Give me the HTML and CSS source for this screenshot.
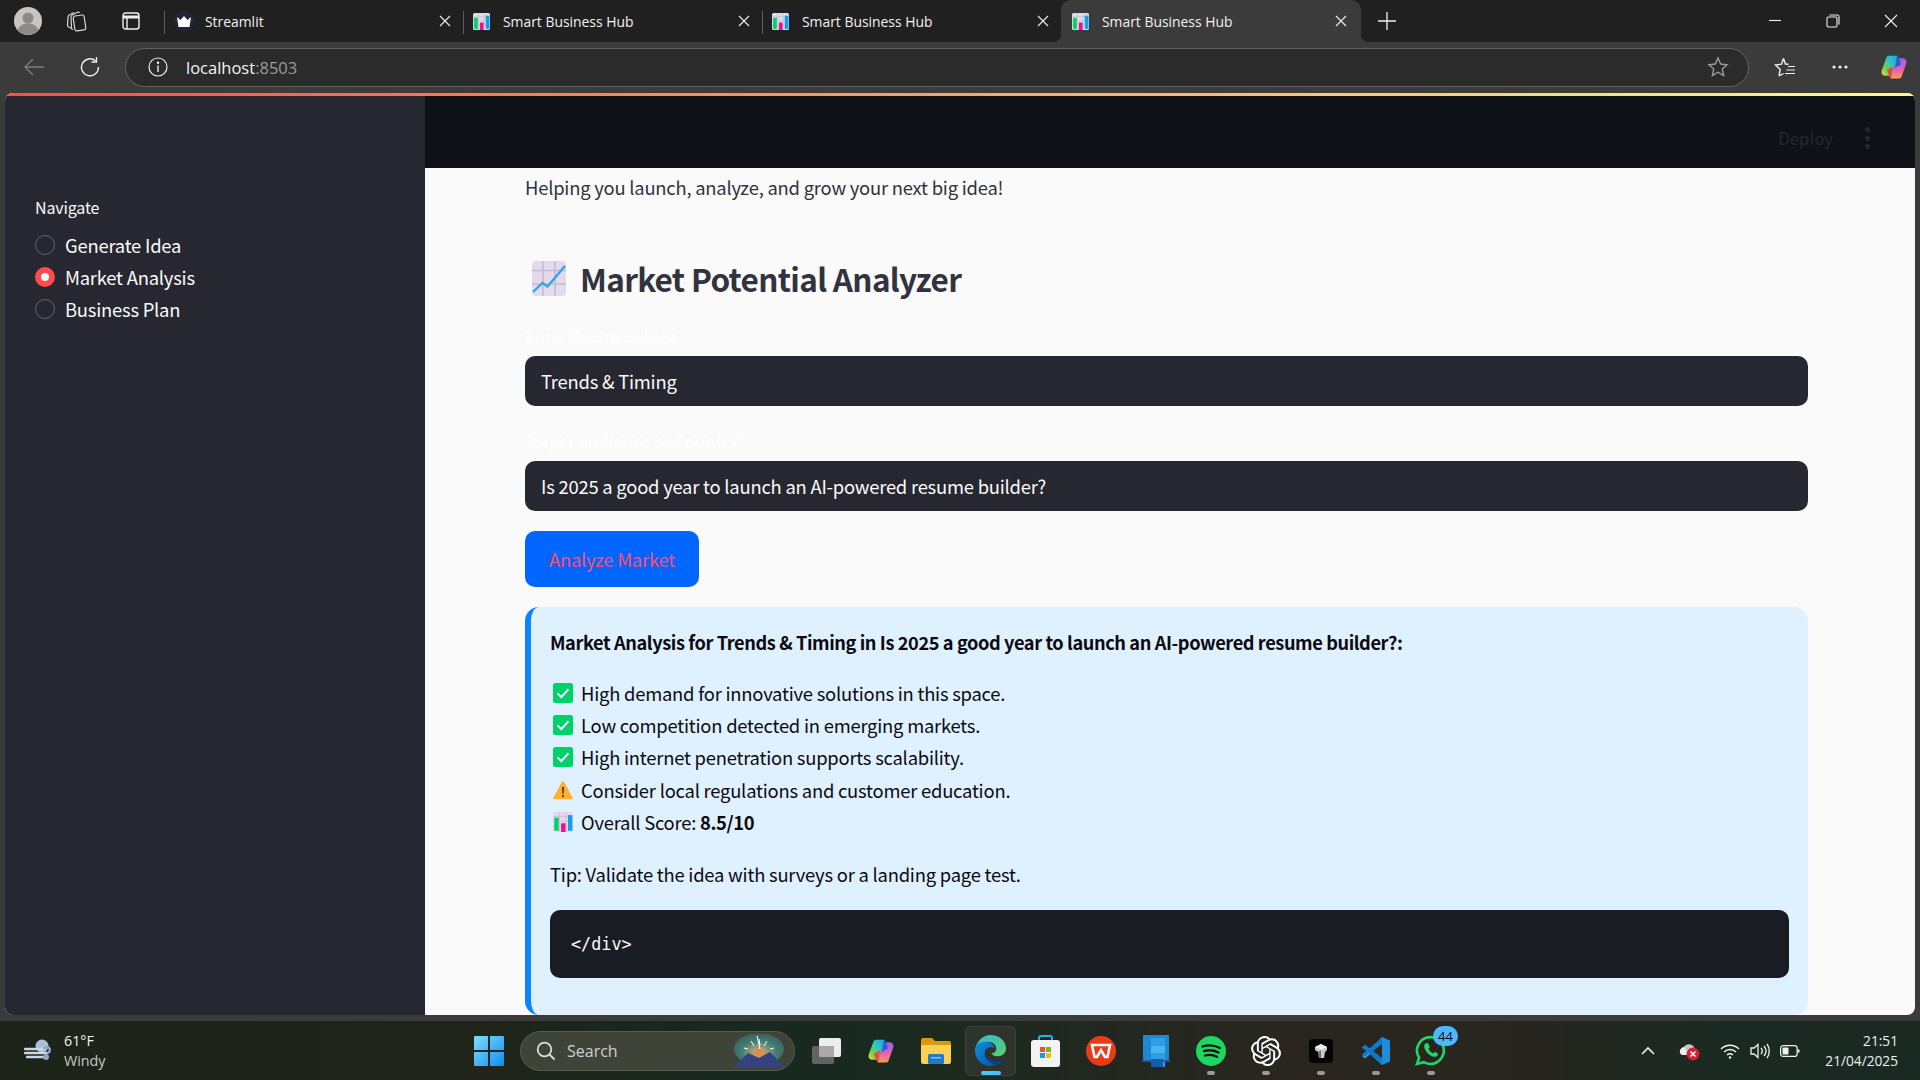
FILE: index.html
```html
<!DOCTYPE html>
<html lang="en">
<head>
<meta charset="utf-8">
<title>Smart Business Hub</title>
<link rel="stylesheet" href="styles.css">
</head>
<body>
<svg class="defs" width="0" height="0" aria-hidden="true">
  <defs>
    <symbol id="barchart" viewBox="0 0 32 32">
      <rect width="32" height="32" rx="3" fill="#e3daec"/>
      <path d="M0 7h32M0 15h32M0 23h32M10 0v32M21 0v32" stroke="#c9bdd3" stroke-width="1.4"/>
      <rect x="2" y="9" width="7" height="21" fill="#00d26a"/>
      <rect x="13" y="18" width="7" height="14" fill="#f70a8d"/>
      <rect x="24" y="5" width="7" height="25" fill="#0fa0e8"/>
    </symbol>
    <symbol id="check" viewBox="0 0 20 20">
      <rect width="20" height="20" rx="2.5" fill="#00d26a"/>
      <path d="M4.6 10.4l3.7 3.7 7.2-8" fill="none" stroke="#fff" stroke-width="2"/>
    </symbol>
    <symbol id="copilot" viewBox="0 0 32 32">
      <defs>
        <linearGradient id="cpa" x1="1" y1="0" x2="0" y2="1"><stop offset="0" stop-color="#12a8f0"/><stop offset=".4" stop-color="#30c4c0"/><stop offset=".7" stop-color="#6dd24a"/><stop offset="1" stop-color="#f3d43a"/></linearGradient>
        <linearGradient id="cpb" x1="0" y1="0" x2="0" y2="1"><stop offset="0" stop-color="#a25be8"/><stop offset=".55" stop-color="#e65fb8"/><stop offset="1" stop-color="#ff9a50"/></linearGradient>
      </defs>
      <path d="M10 3h10l-6 20c-.6 2-2 3-4 3H6c-3 0-5-2.500-4-6L7 6c.6-2 1.500-3 3-3z" fill="url(#cpa)"/>
      <path d="M22 29H12l6-20c.6-2 2-3 4-3h4c3 0 5 2.500 4 6l-5 14c-.6 2-1.500 3-3 3z" fill="url(#cpb)"/>
      <path d="M17 3c3 0 4.500 1.500 5 4l2 6-7 4 3-14z" fill="#1668d8"/>
      <path d="M15 29c-3 0-4.500-1.500-5-4l-2-6 7-4-3 14z" fill="#e8483a"/>
    </symbol>
  </defs>
</svg>

<header class="titlebar">
  <div class="tb-btn tb-profile">
    <svg width="28" height="28" viewBox="0 0 28 28"><circle cx="14" cy="14" r="14" fill="#c8c6c1"/><circle cx="14" cy="11" r="5.5" fill="#8d8b87"/><path d="M3.5 23c2-5 6-6.500 10.500-6.500S22.500 18 24.500 23A14 14 0 0 1 3.500 23z" fill="#8d8b87"/></svg>
  </div>
  <div class="tb-btn tb-work">
    <svg width="24" height="24" viewBox="0 0 24 24" fill="none" stroke="#d6d6d6" stroke-width="1.200"><path d="M6 19l-2-.8c-1-.5-1.500-1-1.500-2L3 8c.1-1 .6-1.700 1.600-2.200L9 3.500"/><path d="M8 20.500l-1.500-.6L6 8c0-1 .6-1.700 1.500-2.200L12 3.500c1-.5 2-.3 2.500.5"/><rect x="9" y="6.500" width="11" height="15" rx="2" transform="rotate(-8 14 14)"/></svg>
  </div>
  <div class="tb-btn tb-vert">
    <svg width="18" height="18" viewBox="0 0 18 18" fill="none" stroke="#f0f0f0" stroke-width="1.400"><rect x="1" y="1" width="16" height="16" rx="2.500"/><path d="M1 5h16" stroke-width="3"/><path d="M5 5v12"/></svg>
  </div>
  <div class="tab tab-first">
    <span class="fav-st"><svg width="14" height="11" viewBox="0 0 14 11"><path d="M0 1l3.500 3L7 0l3.500 4L14 1l-1.500 10h-11z" fill="#fff"/></svg></span>
    <span class="tab-title">Streamlit</span>
    <svg class="tab-x" width="12" height="12" viewBox="0 0 12 12"><path d="M1 1l10 10M11 1L1 11" stroke="#e8e8e8" stroke-width="1.200"/></svg>
  </div>
  <div class="tab">
    <svg class="fav" width="17" height="17"><use href="#barchart"/></svg>
    <span class="tab-title">Smart Business Hub</span>
    <svg class="tab-x" width="12" height="12" viewBox="0 0 12 12"><path d="M1 1l10 10M11 1L1 11" stroke="#e8e8e8" stroke-width="1.200"/></svg>
  </div>
  <div class="tab tab-before-active">
    <svg class="fav" width="17" height="17"><use href="#barchart"/></svg>
    <span class="tab-title">Smart Business Hub</span>
    <svg class="tab-x" width="12" height="12" viewBox="0 0 12 12"><path d="M1 1l10 10M11 1L1 11" stroke="#e8e8e8" stroke-width="1.200"/></svg>
  </div>
  <div class="tab tab-active">
    <svg class="fav" width="17" height="17"><use href="#barchart"/></svg>
    <span class="tab-title">Smart Business Hub</span>
    <svg class="tab-x" width="12" height="12" viewBox="0 0 12 12"><path d="M1 1l10 10M11 1L1 11" stroke="#e8e8e8" stroke-width="1.200"/></svg>
  </div>
  <div class="tab-new">
    <svg width="18" height="18" viewBox="0 0 18 18"><path d="M9 0v18M0 9h18" stroke="#f0f0f0" stroke-width="1.300"/></svg>
  </div>
  <div class="win-controls">
    <svg width="14" height="14" viewBox="0 0 14 14"><path d="M1 6.500h12" stroke="#f0f0f0" stroke-width="1.100"/></svg>
    <svg width="14" height="14" viewBox="0 0 14 14" fill="none" stroke="#f0f0f0" stroke-width="1.100"><rect x="1" y="3" width="10" height="10" rx="1.500"/><path d="M3.500 1h8c1 0 1.500.5 1.500 1.500v8"/></svg>
    <svg width="14" height="14" viewBox="0 0 14 14"><path d="M1 1l12 12M13 1L1 13" stroke="#f0f0f0" stroke-width="1.100"/></svg>
  </div>
</header>

<nav class="toolbar">
  <div class="nav-btn nav-back">
    <svg width="20" height="18" viewBox="0 0 20 18" fill="none" stroke="#7d7d7d" stroke-width="1.300"><path d="M20 9H1M9 1L1 9l8 8"/></svg>
  </div>
  <div class="nav-btn nav-reload">
    <svg width="20" height="20" viewBox="0 0 20 20" fill="none" stroke="#f0f0f0" stroke-width="1.400"><path d="M15.500 3.800A8.500 8.500 0 1 0 18.500 10"/><path d="M16.500 0v5h-5"/></svg>
  </div>
  <div class="address">
    <svg class="addr-info" width="20" height="20" viewBox="0 0 20 20" fill="none" stroke="#ececec" stroke-width="1.200"><circle cx="10" cy="10" r="9"/><path d="M10 8.500V15" stroke-width="1.400"/><circle cx="10" cy="5.800" r=".6" fill="#ececec"/></svg>
    <span class="addr-text">localhost<span class="addr-port">:8503</span></span>
    <svg class="addr-star" width="22" height="22" viewBox="0 0 22 22" fill="none" stroke="#9a9a9a" stroke-width="1.400"><path d="M11 2l2.700 6 6.300.7-4.700 4.300 1.300 6.500L11 16.200 5.400 19.500 6.700 13 2 8.700 8.300 8z"/></svg>
  </div>
  <div class="tool-icons">
    <svg class="ti-fav" width="22" height="20" viewBox="0 0 22 20" fill="none" stroke="#f0f0f0" stroke-width="1.400"><path d="M9.500 1.500l2 5.500 3 .3M5 19l1.200-6.500L1.500 8l6-.8 2-5.700M5 19l4.500-2.500"/><path d="M14 9.500h7M12.500 13h8.500M11 16.500h10" stroke-width="1.200"/></svg>
    <svg class="ti-dots" width="16" height="4" viewBox="0 0 16 4" fill="#f0f0f0"><circle cx="2" cy="2" r="1.600"/><circle cx="8" cy="2" r="1.600"/><circle cx="14" cy="2" r="1.600"/></svg>
    <svg class="ti-copilot" width="28" height="28"><use href="#copilot"/></svg>
  </div>
</nav>

<div class="viewport">
  <div class="app">
    <div class="decoration"></div>
    <div class="app-body">
      <aside class="sidebar">
        <div class="nav-label">Navigate</div>
        <div class="radio-group">
          <div class="radio"><span class="dot"></span><span>Generate Idea</span></div>
          <div class="radio"><span class="dot dot-on"></span><span>Market Analysis</span></div>
          <div class="radio"><span class="dot"></span><span>Business Plan</span></div>
        </div>
      </aside>
      <div class="main-col">
        <div class="app-header">
          <span class="deploy">Deploy</span>
          <span class="kebab"><i></i><i></i><i></i></span>
        </div>
        <main class="main">
          <p class="tagline">Helping you launch, analyze, and grow your next big idea!</p>
          <h1 class="page-title">
            <svg class="title-emoji" width="34" height="35" viewBox="0 0 34 35">
              <rect width="34" height="35" rx="4" fill="#e3daec"/>
              <path d="M0 9.500h34M0 23h34M11 0v35M23 0v35" stroke="#c6b9d1" stroke-width="1.600"/>
              <path d="M1 31l9.500-9 5 3.500L33 5" fill="none" stroke="#2ea6ea" stroke-width="2.400"/>
            </svg>
            <span>Market Potential Analyzer</span>
          </h1>
          <label class="ghost-label">Enter Business Idea</label>
          <div class="select">Trends &amp; Timing</div>
          <label class="ghost-label ghost-second">Target Audience or Country</label>
          <div class="select">Is 2025 a good year to launch an AI-powered resume builder?</div>
          <button class="analyze">Analyze Market</button>
          <section class="result">
            <p class="result-title">Market Analysis for Trends &amp; Timing in Is 2025 a good year to launch an AI-powered resume builder?:</p>
            <ul class="result-list">
              <li><svg width="20" height="20"><use href="#check"/></svg><span>High demand for innovative solutions in this space.</span></li>
              <li><svg width="20" height="20"><use href="#check"/></svg><span>Low competition detected in emerging markets.</span></li>
              <li><svg width="20" height="20"><use href="#check"/></svg><span>High internet penetration supports scalability.</span></li>
              <li><svg width="20" height="20" viewBox="0 0 20 20"><path d="M10 1.500a1.500 1.500 0 0 1 1.300.8l8.300 15.200a1.200 1.200 0 0 1-1 1.800H1.400a1.200 1.200 0 0 1-1-1.800L8.700 2.300A1.500 1.500 0 0 1 10 1.500z" fill="#ffb02e"/><path d="M9.200 7h1.600l-.3 7h-1z" fill="#1a1a1a"/><circle cx="10" cy="16" r="1" fill="#1a1a1a"/></svg><span>Consider local regulations and customer education.</span></li>
              <li><svg width="20" height="20"><use href="#barchart"/></svg><span>Overall Score: <strong>8.5/10</strong></span></li>
            </ul>
            <p class="result-tip">Tip: Validate the idea with surveys or a landing page test.</p>
            <pre class="code">&lt;/div&gt;</pre>
          </section>
        </main>
      </div>
    </div>
  </div>
</div>

<footer class="taskbar">
  <div class="weather">
    <svg width="30" height="24" viewBox="0 0 30 24"><circle cx="18" cy="7" r="6.500" fill="#a9c2dc"/><path d="M1 10h18M1 14h22M3 18h16" stroke="#c9d6e3" stroke-width="2.400" stroke-linecap="round"/><path d="M23 14a3 3 0 1 0-3-4" fill="none" stroke="#8fa8c4" stroke-width="2.400"/><circle cx="22" cy="18" r="3" fill="#8fa8c4"/></svg>
    <div class="weather-text"><span>61°F</span><span class="weather-sub">Windy</span></div>
  </div>
  <div class="task-start">
    <svg width="30" height="30" viewBox="0 0 30 30"><defs><linearGradient id="win" x1="0" y1="0" x2="1" y2="1"><stop offset="0" stop-color="#7fdcff"/><stop offset="1" stop-color="#0f8ff0"/></linearGradient></defs><path d="M1 0h13v14H0V1a1 1 0 0 1 1-1zM16 0h13a1 1 0 0 1 1 1v13H16zM0 16h14v14H1a1 1 0 0 1-1-1zM16 16h14v13a1 1 0 0 1-1 1H16z" fill="url(#win)"/></svg>
  </div>
  <div class="search">
    <svg width="20" height="20" viewBox="0 0 20 20" fill="none" stroke="#dcdcdc" stroke-width="1.800"><circle cx="8.500" cy="8.500" r="6.800"/><path d="M13.500 13.500l5 5"/></svg>
    <span class="search-text">Search</span>
    <svg class="search-art" width="52" height="34" viewBox="0 0 52 34"><defs><radialGradient id="sky" cx=".5" cy=".6" r=".7"><stop offset="0" stop-color="#e8b070"/><stop offset=".5" stop-color="#3d7f78"/><stop offset="1" stop-color="#45504a"/></radialGradient></defs><ellipse cx="26" cy="15" rx="25" ry="16" fill="url(#sky)"/><path d="M0 34L15 19l11 5 11-6 15 16z" fill="#35427f"/><path d="M26 24l-5-6 5-4 5 4z" fill="#e8894a"/><path d="M26 5l1 6M18 7l3 5M34 7l-3 5M11 14l4 1M41 14l-4 1M24 2l3 13" stroke="#fff" stroke-width="1"/></svg>
  </div>
  <div class="apps">
    <div class="app-icon"><svg width="30" height="26" viewBox="0 0 30 26"><rect x="1" y="8" width="22" height="18" rx="2" fill="#636363"/><rect x="8" y="0" width="22" height="19" rx="2" fill="#ededed"/><rect x="8" y="8" width="15" height="11" fill="#a9a9a9"/></svg></div>
    <div class="app-icon"><svg width="28" height="28"><use href="#copilot"/></svg></div>
    <div class="app-icon"><svg width="30" height="26" viewBox="0 0 30 26"><path d="M0 2a2 2 0 0 1 2-2h9l3 3h14a2 2 0 0 1 2 2v3H0z" fill="#d69a0c"/><path d="M0 7h30v17a2 2 0 0 1-2 2H2a2 2 0 0 1-2-2z" fill="#fcd053"/><rect x="7" y="16" width="16" height="10" rx="1.500" fill="#2279c8"/><rect x="10" y="19" width="10" height="1.500" fill="#7dc1f5"/></svg></div>
    <div class="app-icon app-icon-active">
      <svg width="31" height="31" viewBox="0 0 32 32"><defs><linearGradient id="ed1" x1="0" y1="0" x2="1" y2="1"><stop offset="0" stop-color="#2fb8d8"/><stop offset="1" stop-color="#5ad06a"/></linearGradient><linearGradient id="ed2" x1="0" y1="0" x2="1" y2="1"><stop offset="0" stop-color="#0d8fe0"/><stop offset="1" stop-color="#0b50a8"/></linearGradient></defs><path d="M16 0c9 0 16 6 16 14 0 5-4 8-8 8-3 0-6-1-7-3 3 0 5-2 5-5 0-4-4-7-9-7-6 0-11 4-13 9C1 7 8 0 16 0z" fill="url(#ed1)"/><path d="M0 16C0 10 5 7 11 7c5 0 9 3 9 7-4-3-10-1-10 5 0 6 6 11 13 11-2 1-5 2-7 2C7 32 0 25 0 16z" fill="url(#ed2)"/><path d="M10 19c0 6 6 11 13 11 3 0 6-2 8-5-2 1-4 2-7 2-6 0-12-3-14-8z" fill="#0a3f8c"/></svg>
      <span class="indicator"></span>
    </div>
    <div class="app-icon"><svg width="29" height="32" viewBox="0 0 29 32"><path d="M8 7V3a2 2 0 0 1 2-2h9a2 2 0 0 1 2 2v4" fill="none" stroke="#2ab0e8" stroke-width="2"/><rect y="5" width="29" height="27" rx="3" fill="#f3f3f3"/><rect x="9" y="12" width="5" height="5" fill="#f25022"/><rect x="15" y="12" width="5" height="5" fill="#7fba00"/><rect x="9" y="18" width="5" height="5" fill="#00a4ef"/><rect x="15" y="18" width="5" height="5" fill="#ffb900"/></svg></div>
    <div class="app-icon"><svg width="30" height="30" viewBox="0 0 30 30"><circle cx="15" cy="15" r="15" fill="#ed3a16"/><path d="M6 9h18l-2.500 12H19l-4-7-4 7H8.500z" fill="none" stroke="#fff" stroke-width="2.600"/></svg></div>
    <div class="app-icon"><svg width="30" height="32" viewBox="0 0 30 32"><rect x="2" y="0" width="26" height="25" rx="1" fill="#1e88d2"/><rect x="10" y="3" width="14" height="29" fill="#2f9ee6"/><rect x="10" y="11" width="14" height="7" fill="#4ab5f0"/><rect x="10" y="24" width="12" height="8" fill="#0f5fa8"/><path d="M0 25h30l-2 2H2z" fill="#0f5fa8"/></svg></div>
    <div class="app-icon app-icon-open"><svg width="30" height="30" viewBox="0 0 30 30"><circle cx="15" cy="15" r="15" fill="#1ed760"/><path d="M6.500 10.500c6-1.800 12-1.300 17.500 1.500M8 15c5-1.300 10-.9 14.500 1.500M9 19.500c4-1 8.500-.7 12 1.300" fill="none" stroke="#111" stroke-width="2.300" stroke-linecap="round"/></svg><span class="dot-open"></span></div>
    <div class="app-icon app-icon-open"><svg width="30" height="30" viewBox="0 0 24 24"><path fill="#fff" d="M22.2819 9.8211a5.9847 5.9847 0 0 0-.5157-4.9108 6.0462 6.0462 0 0 0-6.5098-2.9A6.0651 6.0651 0 0 0 4.9807 4.1818a5.9847 5.9847 0 0 0-3.9977 2.9 6.0462 6.0462 0 0 0 .7427 7.0966 5.98 5.98 0 0 0 .511 4.9107 6.051 6.051 0 0 0 6.5146 2.9001A5.9847 5.9847 0 0 0 13.2599 24a6.0557 6.0557 0 0 0 5.7718-4.2058 5.9894 5.9894 0 0 0 3.9977-2.9001 6.0557 6.0557 0 0 0-.7475-7.0729zm-9.022 12.6081a4.4755 4.4755 0 0 1-2.8764-1.0408l.1419-.0804 4.7783-2.7582a.7948.7948 0 0 0 .3927-.6813v-6.7369l2.02 1.1686a.071.071 0 0 1 .038.052v5.5826a4.504 4.504 0 0 1-4.4945 4.4944zm-9.6607-4.1254a4.4708 4.4708 0 0 1-.5346-3.0137l.142.0852 4.783 2.7582a.7712.7712 0 0 0 .7806 0l5.8428-3.3685v2.3324a.0804.0804 0 0 1-.0332.0615L9.74 19.9502a4.4992 4.4992 0 0 1-6.1408-1.6464zM2.3408 7.8956a4.485 4.485 0 0 1 2.3655-1.9728V11.6a.7664.7664 0 0 0 .3879.6765l5.8144 3.3543-2.0201 1.1685a.0757.0757 0 0 1-.071 0l-4.8303-2.7865A4.504 4.504 0 0 1 2.3408 7.872zm16.5963 3.8558L13.1038 8.364 15.1192 7.2a.0757.0757 0 0 1 .071 0l4.8303 2.7913a4.4944 4.4944 0 0 1-.6765 8.1042v-5.6772a.79.79 0 0 0-.407-.667zm2.0107-3.0231l-.142-.0852-4.7735-2.7818a.7759.7759 0 0 0-.7854 0L9.409 9.2297V6.8974a.0662.0662 0 0 1 .0284-.0615l4.8303-2.7866a4.4992 4.4992 0 0 1 6.6802 4.66zM8.3065 12.863l-2.02-1.1638a.0804.0804 0 0 1-.038-.0567V6.0742a4.4992 4.4992 0 0 1 7.3757-3.4537l-.142.0805L8.704 5.459a.7948.7948 0 0 0-.3927.6813zm1.0976-2.3654l2.602-1.4998 2.6069 1.4998v2.9994l-2.5974 1.4997-2.6067-1.4997Z"/></svg><span class="dot-open"></span></div>
    <div class="app-icon app-icon-open"><svg width="24" height="24" viewBox="0 0 24 24"><rect width="24" height="24" rx="4" fill="#050505"/><path d="M12 5l6 3v3l-2 2-1 6h-5l-1-6-3-2V8z" fill="#c9c9c9"/><path d="M12 5l6 3-6 3-6-3z" fill="#f0f0f0"/><path d="M12 11v8h-2l-1-6z" fill="#6e6e6e"/></svg><span class="dot-open"></span></div>
    <div class="app-icon app-icon-open"><svg width="30" height="30" viewBox="0 0 30 30"><path d="M21 1l8 3.500v21L21 29 8 17l13-9z" fill="#1c8fdc"/><path d="M21 8v14L4 9 1 11.500 8 15 1 20l3 2.500L21 8z" fill="#2aa3ee"/><path d="M21 1L8 13 4 9l-3 2.500L5 15l-4 3.500L4 21l4-4 13 12z" fill="#0f7bc8"/><path d="M21 8L12 15l9 7z" fill="#2b2823"/></svg><span class="dot-open"></span></div>
    <div class="app-icon app-icon-open app-wa">
      <svg width="31" height="31" viewBox="0 0 30 30"><path d="M15 2a13 13 0 0 0-11 20l-2 6 6.500-1.700A13 13 0 1 0 15 2z" fill="none" stroke="#25d366" stroke-width="2.600"/><path d="M10.500 8c-1 .5-2 2-1.500 4 1 4 5 8 9 9 2 .5 3.500-.5 4-1.500.3-.8.3-1.500 0-1.700l-3-1.500-1.500 1.500c-2-.8-3.800-2.600-4.500-4.500l1.300-1.500-1.200-3.300c-.8-.7-1.800-.8-2.600-.5z" fill="#25d366"/></svg>
      <span class="badge">44</span>
      <span class="dot-open"></span>
    </div>
  </div>
  <div class="tray">
    <svg class="tr-chev" width="14" height="9" viewBox="0 0 14 9"><path d="M1 8l6-6 6 6" fill="none" stroke="#f0f0f0" stroke-width="1.600"/></svg>
    <svg class="tr-cloud" width="24" height="20" viewBox="0 0 24 20"><path d="M2 12a5 5 0 0 1 4-6 6 6 0 0 1 10 0l2 8H4z" fill="#c8c8c8"/><path d="M2 12a5 5 0 0 1 4-6l5 8H4z" fill="#f0f0f0"/><circle cx="15" cy="13" r="6.500" fill="#d3202e"/><path d="M12.500 10.500l5 5M17.500 10.500l-5 5" stroke="#fff" stroke-width="1.500"/></svg>
    <svg class="tr-wifi" width="20" height="16" viewBox="0 0 20 16" fill="none" stroke="#f0f0f0" stroke-width="1.400"><path d="M1 6c5-5 13-5 18 0M4 9c3.500-3.300 8.500-3.300 12 0M7 12c2-1.700 4-1.700 6 0"/><circle cx="10" cy="14.500" r="1.200" fill="#f0f0f0" stroke="none"/></svg>
    <svg class="tr-vol" width="20" height="16" viewBox="0 0 20 16" fill="none" stroke="#f0f0f0" stroke-width="1.300"><path d="M1 5h3l4-3.500v13L4 11H1z"/><path d="M11 5c1.500 1.700 1.500 4.300 0 6M14 3c2.500 3 2.500 7 0 10M17 1c3 4 3 10 0 14"/></svg>
    <svg class="tr-bat" width="20" height="12" viewBox="0 0 20 12" fill="none" stroke="#f0f0f0" stroke-width="1.200"><rect x=".6" y=".6" width="16.500" height="10.800" rx="2.500"/><rect x="2.500" y="2.500" width="6" height="7" rx="1" fill="#f0f0f0" stroke="none"/><path d="M18.500 4.500v3" stroke-width="2"/></svg>
    <div class="clock"><span>21:51</span><span>21/04/2025</span></div>
  </div>
</footer>
</body>
</html>
```

FILE: styles.css
```css
* { box-sizing: border-box; }
html, body { margin: 0; padding: 0; height: 100%; }
body {
  width: 1920px;
  height: 1080px;
  overflow: hidden;
  display: flex;
  flex-direction: column;
  background: #3b3b3b;
  font-family: "Open Sans", "Noto Sans", sans-serif;
}
.defs { position: absolute; }

/* Browser title bar */
.titlebar {
  height: 42px;
  flex: none;
  display: flex;
  align-items: center;
  background: #202020;
  color: #f2f2f2;
  font-size: 13.9px;
}
.tb-btn { display: flex; align-items: center; justify-content: center; height: 100%; flex: none; }
.tb-profile { width: 56px; }
.tb-work { width: 42px; }
.tb-vert { width: 66px; }
.tab {
  flex: none;
  position: relative;
  width: 299px;
  height: 100%;
  display: flex;
  align-items: center;
  padding: 0 12px 0 10px;
}
.tab::before {
  content: "";
  position: absolute;
  left: 0;
  top: 11px;
  bottom: 8px;
  width: 1px;
  background: #5e5e5e;
}
.tab-active {
  width: 300px;
  background: #3b3b3b;
  border-radius: 10px 10px 0 0;
  padding-left: 11px;
  padding-right: 14px;
}
.tab-active::before,
.tab-active::after {
  content: "";
  position: absolute;
  top: auto;
  bottom: 0;
  width: 8px;
  height: 8px;
}
.tab-active::before { left: -8px; background: radial-gradient(circle at 0 0, transparent 8px, #3b3b3b 8.5px); }
.tab-active::after { left: 100%; background: radial-gradient(circle at 100% 0, transparent 8px, #3b3b3b 8.5px); }
.fav { flex: none; margin-right: 13px; }
.fav-st {
  flex: none;
  width: 20px;
  height: 20px;
  margin: 0 11px 0 0;
  border-radius: 50%;
  background: #23243a;
  display: flex;
  align-items: center;
  justify-content: center;
}
.tab-title { flex: 1; white-space: nowrap; }
.tab-x { flex: none; }
.tab-new { flex: none; width: 52px; display: flex; justify-content: center; align-items: center; }
.win-controls {
  margin-left: auto;
  display: flex;
  align-items: center;
  gap: 44px;
  padding-right: 22px;
}

/* Address bar row */
.toolbar {
  height: 51px;
  flex: none;
  display: flex;
  align-items: center;
  background: #3b3b3b;
  padding-bottom: 1px;
}
.nav-btn { flex: none; display: flex; justify-content: center; align-items: center; }
.nav-back { width: 68px; }
.nav-reload { width: 44px; }
.address {
  flex: none;
  margin-left: 13px;
  width: 1624px;
  height: 39px;
  border: 1px solid #636363;
  border-radius: 20px;
  background: #2b2b2b;
  display: flex;
  align-items: center;
  padding: 0 19px 0 22px;
  color: #f4f4f4;
  font-size: 16.5px;
}
.addr-info { flex: none; margin-right: 18px; }
.addr-text { flex: 1; }
.addr-port { color: #9a9a9a; }
.tool-icons { flex: none; display: flex; align-items: center; }
.ti-fav { margin-left: 25px; }
.ti-dots { margin-left: 36px; }
.ti-copilot { margin-left: 32px; }

/* Page viewport */
.viewport { height: 928px; flex: none; padding: 0 5px 6px; }
.app {
  height: 100%;
  display: flex;
  flex-direction: column;
  border-radius: 8px;
  overflow: hidden;
  font-family: "Noto Sans CJK SC", "Noto Sans", sans-serif;
  font-size: 18.4px;
  letter-spacing: -0.22px;
  background: #fafafa;
}
.decoration { height: 3px; flex: none; background: linear-gradient(90deg, #ff4b4b, #fffd80); }
.app-body { flex: 1; min-height: 0; display: flex; }

/* Sidebar */
.sidebar { flex: none; width: 420px; background: #262730; color: #fafafa; padding: 98px 0 0 30px; }
.nav-label { font-size: 16px; letter-spacing: -0.15px; line-height: 26px; }
.radio-group { margin-top: 9px; display: flex; flex-direction: column; }
.radio { height: 32px; display: flex; align-items: center; gap: 10px; }
.dot {
  width: 20px;
  height: 20px;
  border-radius: 50%;
  border: 1.500px solid #62646d;
  flex: none;
}
.dot-on { border: 6px solid #ff4b4b; background: #fff; }

/* Main column */
.main-col { flex: 1; min-width: 0; display: flex; flex-direction: column; }
.app-header {
  height: 72px;
  flex: none;
  background: #0e1117;
  display: flex;
  align-items: center;
  justify-content: flex-end;
  padding: 12px 45px 0 0;
}
.deploy { color: #262730; font-size: 16.8px; letter-spacing: 0; margin-right: 32px; }
.kebab { display: flex; flex-direction: column; gap: 3.500px; }
.kebab i { display: block; width: 5px; height: 5px; border-radius: 50%; background: #262730; }
.main { flex: 1; min-height: 0; padding: 0 107px 0 100px; color: #31333f; overflow: hidden; }
.tagline { margin: 0; height: 40px; line-height: 39px; }
.page-title {
  margin: 40px 0 0;
  height: 60px;
  display: flex;
  align-items: center;
  gap: 14px;
  padding-left: 7px;
  font-size: 31.5px;
  letter-spacing: -0.68px;
  font-weight: 600;
  color: #31333f;
}
.title-emoji { flex: none; }
.ghost-label { display: block; margin-top: 18px; height: 20px; line-height: 20px; font-size: 16.8px; letter-spacing: 0; color: #ffffff; }
.ghost-second { margin-top: 25px; }
.select {
  margin-top: 10px;
  height: 50px;
  border-radius: 10px;
  background: #262730;
  color: #fafafa;
  padding: 0 16px;
  display: flex;
  align-items: center;
}
.analyze {
  display: block;
  margin-top: 20px;
  width: 174px;
  height: 56px;
  border: 0;
  border-radius: 10px;
  background: #0066ff;
  color: #ff4b6e;
  font: inherit;
  letter-spacing: inherit;
}
.result {
  margin-top: 20px;
  height: 408px;
  background: #dff1ff;
  border-left: 6px solid #0a84ff;
  border-radius: 14px;
  padding: 21px 19px 0 19px;
  color: #0a0a12;
}
.result-title { margin: 0; line-height: 28px; font-weight: 600; font-size: 18.2px; letter-spacing: -0.4px; }
.result-list { margin: 21px 0 0; padding: 0; list-style: none; }
.result-list li { height: 32.200px; display: flex; align-items: center; gap: 8px; padding-left: 3px; }
.result-list svg { flex: none; }
.result-list strong { font-weight: 600; letter-spacing: -0.4px; }
.result-tip { margin: 22px 0 0; line-height: 28px; }
.code {
  margin: 22px 0 0;
  height: 68px;
  border-radius: 10px;
  background: #1a1c24;
  color: #fafafa;
  padding: 0 21px;
  font-family: "DejaVu Sans Mono", "Liberation Mono", monospace;
  font-size: 16.800px;
  letter-spacing: 0;
  line-height: 68px;
}

/* Windows taskbar */
.taskbar {
  height: 59px;
  flex: none;
  display: flex;
  align-items: center;
  background: linear-gradient(90deg, #1e2319 0%, #20241a 25%, #17291f 38%, #1c2a20 50%, #2a261f 68%, #26261f 80%, #1a2a22 90%, #1a2a22 100%);
  color: #f0f0f0;
  font-family: "Open Sans", "Noto Sans", sans-serif;
}
.weather { flex: none; width: 461px; display: flex; align-items: center; padding-left: 24px; gap: 10px; }
.weather-text { display: flex; flex-direction: column; font-size: 14.300px; line-height: 20px; }
.weather-sub { color: #c8c8c8; }
.task-start { flex: none; width: 55px; display: flex; justify-content: center; }
.search {
  flex: none;
  margin-left: 4px;
  width: 275px;
  height: 40px;
  border-radius: 20px;
  background: #3f4439;
  border: 1px solid #565b50;
  display: flex;
  align-items: center;
  padding: 0 9px 0 15px;
}
.search-text { flex: 1; margin-left: 11px; font-size: 16px; color: #cfcfcf; }
.apps { flex: none; margin-left: 3px; display: flex; align-items: center; }
.app-icon { position: relative; flex: none; width: 55px; height: 50px; display: flex; align-items: center; justify-content: center; }
.app-icon-active { width: 51px; margin: 0 2px; background: #2e342c; border-radius: 6px; outline: 1px solid #3c423a; outline-offset: -1px; }
.indicator { position: absolute; left: 16px; bottom: 1px; width: 20px; height: 4px; border-radius: 2px; background: #4cc2ff; }
.dot-open { position: absolute; left: 24px; bottom: 1px; width: 8px; height: 4px; border-radius: 2px; background: #9a9a9a; }
.badge {
  position: absolute;
  left: 30px;
  top: 0;
  width: 25px;
  height: 20px;
  border-radius: 10px;
  background: #4cb8ff;
  color: #101010;
  font-size: 13px;
  line-height: 20px;
  text-align: center;
}
.tray { flex: none; margin-left: 173px; display: flex; align-items: center; }
.tr-chev { margin-left: 10px; }
.tr-cloud { margin-left: 23px; }
.tr-wifi { margin-left: 18px; }
.tr-vol { margin-left: 10px; }
.tr-bat { margin-left: 10px; }
.clock {
  margin-left: 20px;
  width: 78px;
  display: flex;
  flex-direction: column;
  align-items: flex-end;
  font-size: 13.700px;
  line-height: 20px;
  white-space: nowrap;
}
```
